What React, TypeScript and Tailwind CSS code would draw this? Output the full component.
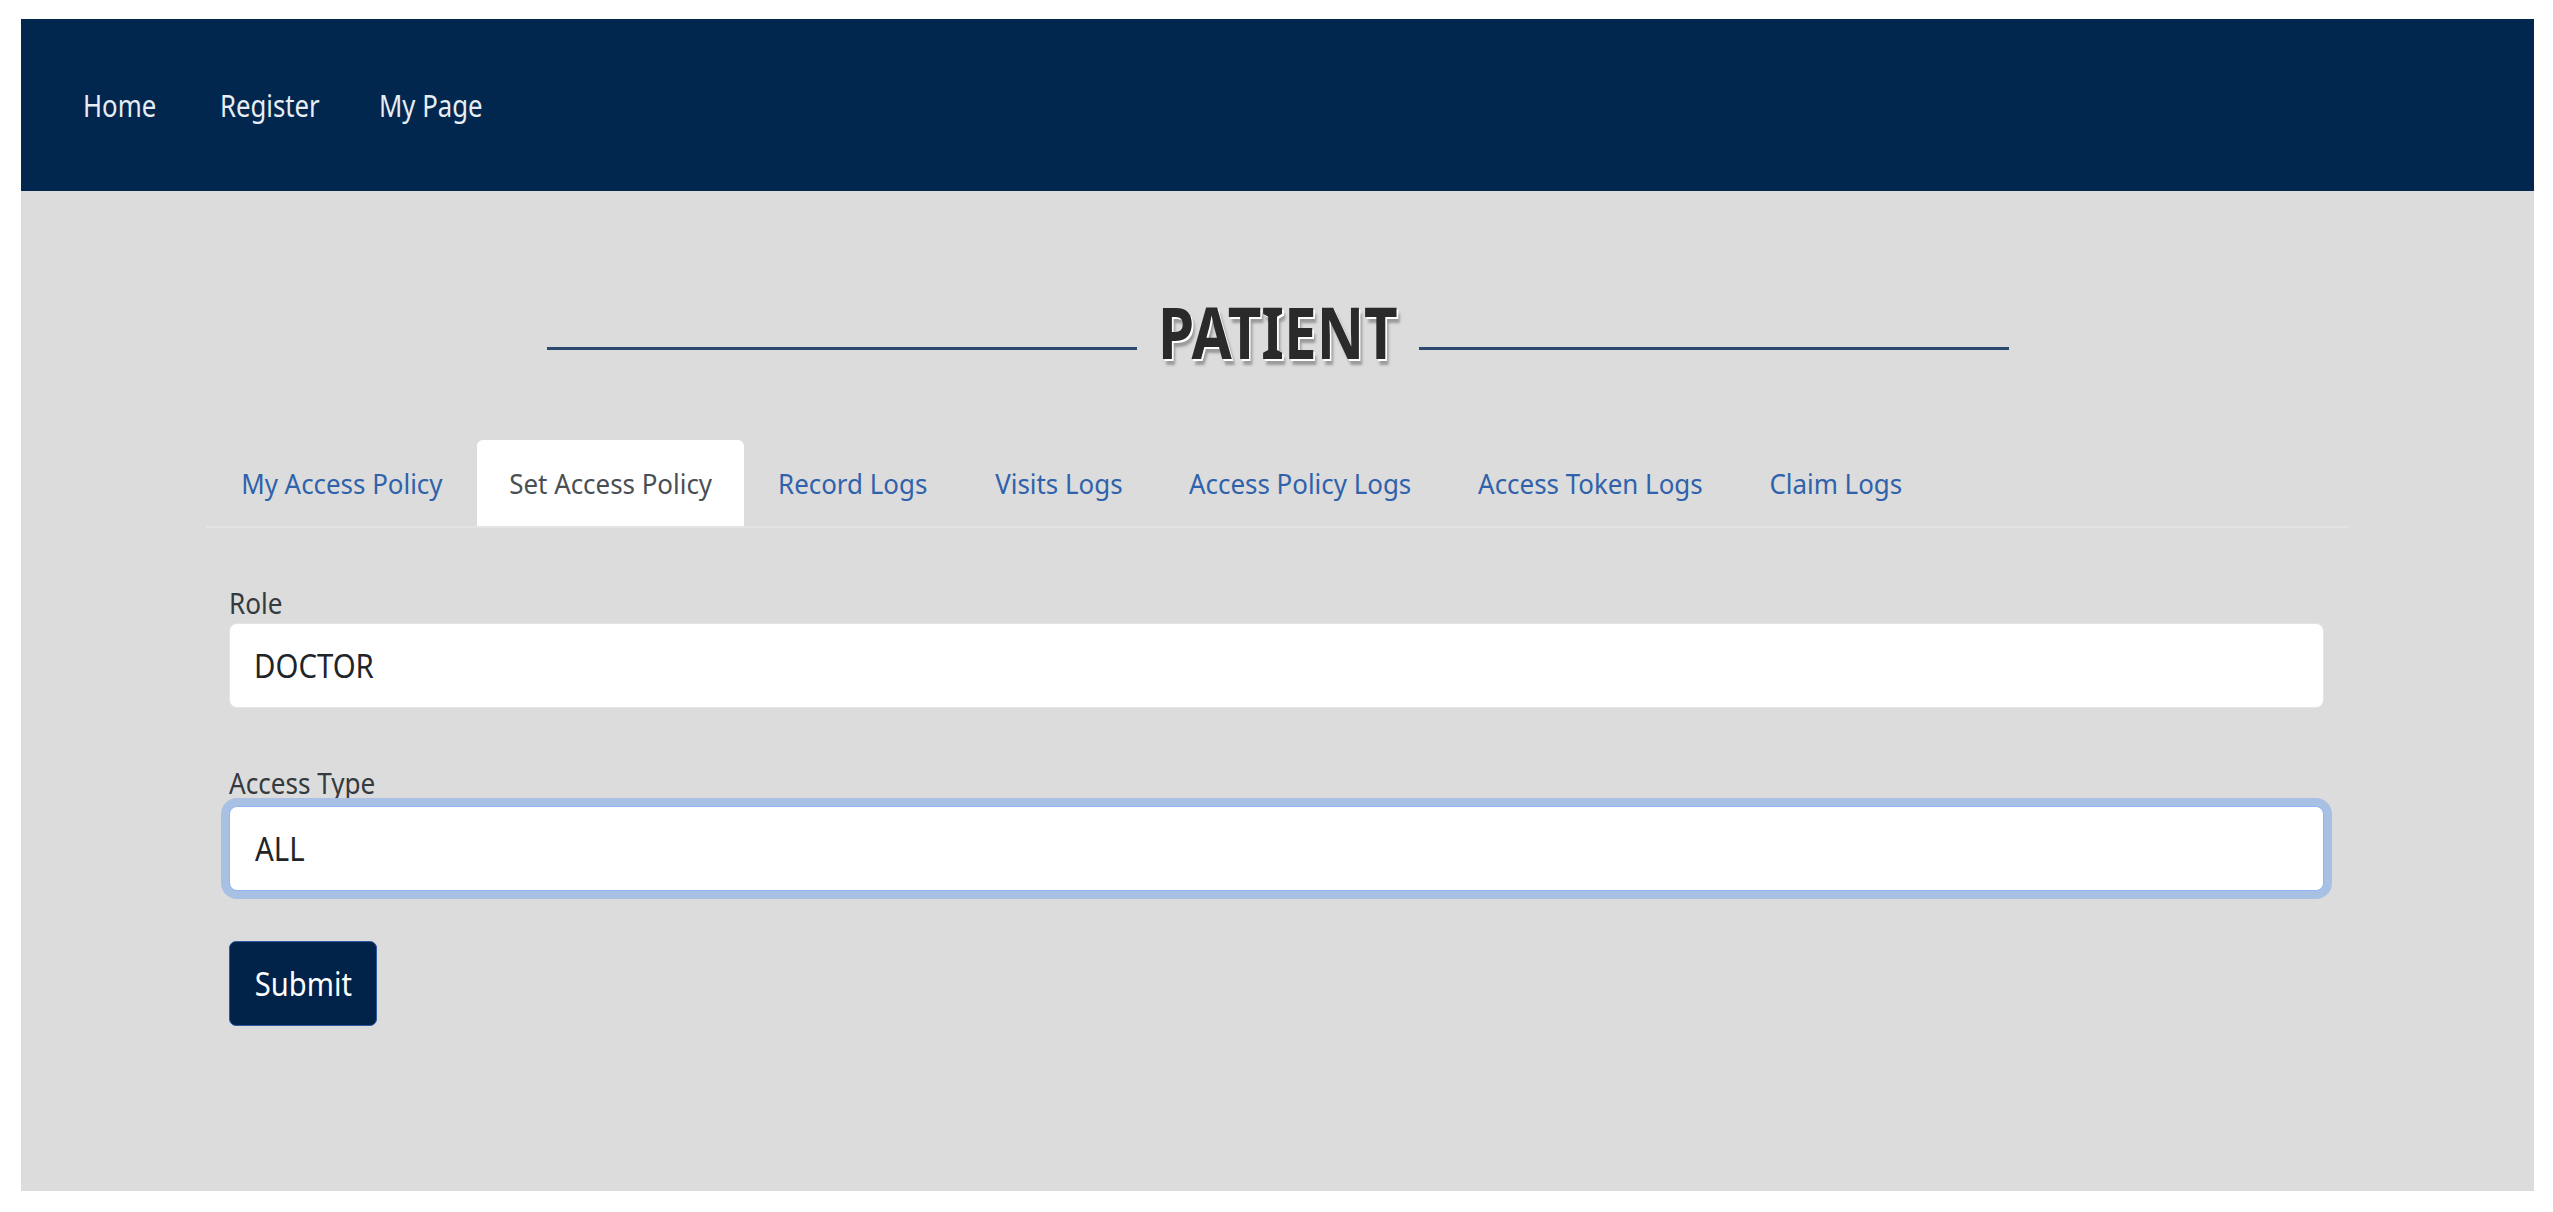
import React from "react";

const tabs = [
  { label: "My Access Policy", w: "w-[271px]", active: false },
  { label: "Set Access Policy", w: "w-[267px]", active: true },
  { label: "Record Logs", w: "w-[218px]", active: false },
  { label: "Visits Logs", w: "w-[194px]", active: false },
  { label: "Access Policy Logs", w: "w-[288px]", active: false },
  { label: "Access Token Logs", w: "w-[293px]", active: false },
  { label: "Claim Logs", w: "w-[198px]", active: false },
];

export default function App() {
  return (
    <div
      className="w-full h-[1212px] bg-white pl-[21px] pr-[19px] pt-[19px] pb-[21px]"
      style={{ fontFamily: '"Noto Sans", "Open Sans", sans-serif' }}
    >
      <div className="flex flex-col h-full bg-[#dcdcdc]">
        {/* navbar */}
        <nav className="h-[172px] shrink-0 bg-[#01274f] flex items-center pl-[62px] text-[31px] text-[#e8edf3]">
          <div className="w-[137px]">
            <span className="inline-block origin-left scale-x-[0.83]">Home</span>
          </div>
          <div className="w-[159px]">
            <span className="inline-block origin-left scale-x-[0.83]">Register</span>
          </div>
          <div className="w-[140px]">
            <span className="inline-block origin-left scale-x-[0.83]">My Page</span>
          </div>
        </nav>

        {/* title */}
        <div className="mt-[104px] flex items-end justify-center">
          <div className="w-[590px] h-[3px] bg-[#2b4a6e] mb-[17px]" />
          <div className="w-[282px] flex justify-center">
            <h1
              className="inline-block scale-x-[0.81] text-[72px] leading-[72px] font-bold text-[#2a2a2a]"
              style={{ textShadow: "2px 2px 0 #ffffff, 4px 6px 3px #9a9a9a" }}
            >
              PATIENT
            </h1>
          </div>
          <div className="w-[590px] h-[3px] bg-[#2b4a6e] mb-[17px]" />
        </div>

        {/* tabs */}
        <div className="mt-[73px] ml-[185px] w-[2142px] flex border-b-[2px] border-[#e3e3e3]">
          {tabs.map((t) => (
            <div
              key={t.label}
              className={
                t.active
                  ? `${t.w} h-[86px] -mb-[2px] flex items-center justify-center bg-white rounded-t-[6px] text-[28px] text-[#4a4f55]`
                  : `${t.w} h-[86px] flex items-center justify-center text-[28px] text-[#2f62ab]`
              }
            >
              <span className="inline-block whitespace-nowrap scale-x-[0.925]">{t.label}</span>
            </div>
          ))}
        </div>

        {/* form */}
        <div className="ml-[208px] mr-[210px] flex flex-col">
          <label className="mt-[57px] h-[36px] leading-[36px] text-[29px] text-[#343a40] mb-[2px]">
            <span className="inline-block origin-left scale-x-[0.9]">Role</span>
          </label>
          <div className="h-[85px] bg-white rounded-[8px] border border-[#e2e4e8] flex items-center pl-[24px] text-[33px] text-[#212529]">
            <span className="inline-block origin-left scale-x-[0.89]">DOCTOR</span>
          </div>

          <label className="mt-[57px] h-[36px] leading-[36px] text-[29px] text-[#343a40] mb-[5px]">
            <span className="inline-block origin-left scale-x-[0.9]">Access Type</span>
          </label>
          <div className="relative z-0 h-[85px] bg-white rounded-[8px] border border-[#8fb6f0] shadow-[0_0_0_8px_#a9c0e5] flex items-center pl-[25px] text-[33px] text-[#212529]">
            <span className="inline-block origin-left scale-x-[0.89]">ALL</span>
          </div>

          <div className="mt-[50px]">
            <button className="w-[148px] h-[85px] bg-[#012249] border border-[#2a5aa3] rounded-[7px] text-white text-[32px] flex items-center justify-center">
              <span className="inline-block scale-x-[0.91]">Submit</span>
            </button>
          </div>
        </div>
      </div>
    </div>
  );
}
